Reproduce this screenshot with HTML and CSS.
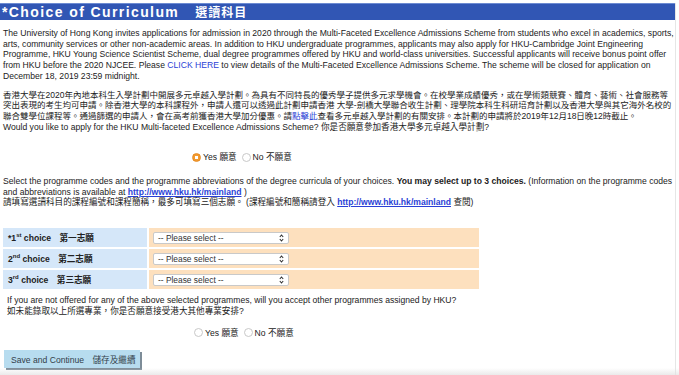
FILE: index.html
```html
<!DOCTYPE html>
<html lang="zh-Hant">
<head>
    <meta charset="UTF-8">
    <meta name="viewport" content="width=device-width, initial-scale=1.0">
    <title>Choice of Curriculum 選讀科目</title>
    <link rel="stylesheet" href="styles.css">
</head>
<body>
    <div class="pagina">
        <div class="titulo">*Choice of Curriculum<span class="titulo-cn">選讀科目</span></div>

        <p class="texto">The University of Hong Kong invites applications for admission in 2020 through the Multi-Faceted Excellence Admissions Scheme from students who excel in academics, sports, arts, community services or other non-academic areas. In addition to HKU undergraduate programmes, applicants may also apply for HKU-Cambridge Joint Engineering Programme, HKU Young Science Scientist Scheme, dual degree programmes offered by HKU and world-class universities. Successful applicants will receive bonus point offer from HKU before the 2020 NJCEE. Please <a href="#" class="enlace">CLICK HERE</a> to view details of the Multi-Faceted Excellence Admissions Scheme. The scheme will be closed for application on December 18, 2019 23:59 midnight.</p>

        <p class="texto">
            <span class="texto-cn">香港大學在2020年內地本科生入學計劃中開展多元卓越入學計劃。為具有不同特長的優秀學子提供多元求學機會。在校學業成績優秀，或在學術類競賽、體育、藝術、社會服務等<br>突出表現的考生均可申請。除香港大學的本科課程外，申請人還可以透過此計劃申請香港 大學-劍橋大學聯合收生計劃、理學院本科生科研培育計劃以及香港大學與其它海外名校的<br>聯合雙學位課程等。通過篩選的申請人，會在高考前獲香港大學加分優惠。請<a href="#" class="enlace">點擊此</a>查看多元卓越入學計劃的有關安排。本計劃的申請將於2019年12月18日晚12時截止。</span><br>
            Would you like to apply for the HKU Multi-faceted Excellence Admissions Scheme? 你是否願意參加香港大學多元卓越入學計劃?
        </p>

        <div class="opciones opciones-1">
            <label class="opcion"><span class="radio marcado"></span>Yes 願意</label>
            <label class="opcion"><span class="radio"></span>No 不願意</label>
        </div>

        <p class="texto seleccion">Select the programme codes and the programme abbreviations of the degree curricula of your choices. <b>You may select up to 3 choices.</b> (Information on the programme codes and abbreviations is available at <a href="#" class="enlace url">http://www.hku.hk/mainland</a> )<br>請填寫選讀科目的課程編號和課程簡稱，最多可填寫三個志願。 (課程編號和簡稱請登入 <a href="#" class="enlace url">http://www.hku.hk/mainland</a> 查閱)</p>

        <table class="tabla-elecciones">
            <tr>
                <td class="etiqueta">*1<sup>st</sup> choice <span class="cn">第一志願</span></td>
                <td class="campo">
                    <div class="selector">-- Please select --
                        <svg class="flechas" width="5" height="8" viewBox="0 0 5 8"><path d="M0.8 3 L2.5 1 L4.2 3 M0.8 5 L2.5 7 L4.2 5" fill="none" stroke="#333" stroke-width="1.1"/></svg>
                    </div>
                </td>
            </tr>
            <tr>
                <td class="etiqueta">2<sup>nd</sup> choice <span class="cn">第二志願</span></td>
                <td class="campo">
                    <div class="selector">-- Please select --
                        <svg class="flechas" width="5" height="8" viewBox="0 0 5 8"><path d="M0.8 3 L2.5 1 L4.2 3 M0.8 5 L2.5 7 L4.2 5" fill="none" stroke="#333" stroke-width="1.1"/></svg>
                    </div>
                </td>
            </tr>
            <tr>
                <td class="etiqueta">3<sup>rd</sup> choice <span class="cn">第三志願</span></td>
                <td class="campo">
                    <div class="selector">-- Please select --
                        <svg class="flechas" width="5" height="8" viewBox="0 0 5 8"><path d="M0.8 3 L2.5 1 L4.2 3 M0.8 5 L2.5 7 L4.2 5" fill="none" stroke="#333" stroke-width="1.1"/></svg>
                    </div>
                </td>
            </tr>
        </table>

        <p class="texto pregunta">If you are not offered for any of the above selected programmes, will you accept other programmes assigned by HKU?<br>如未能錄取以上所選專業，你是否願意接受港大其他專業安排?</p>

        <div class="opciones opciones-2">
            <label class="opcion"><span class="radio"></span>Yes 願意</label>
            <label class="opcion"><span class="radio"></span>No 不願意</label>
        </div>

        <button class="guardar-btn">Save and Continue <span class="cn">儲存及繼續</span></button>
    </div>
    <div class="sombra-inferior"></div>
</body>
</html>
```

FILE: styles.css
```css
body {
    font-family: "Liberation Sans", "Noto Sans CJK TC", sans-serif;
    margin: 0;
    padding: 3px 0 0 0;
    background-color: #ffffff;
    color: #222222;
    overflow: hidden;
}

.pagina {
    width: 672px;
    padding-left: 3px;
    border-right: 1px solid #e6e6e6;
    min-height: 372px;
}

.titulo {
    background-color: #3156b4;
    border-top: 1px solid #6d8bd2;
    color: white;
    font-weight: bold;
    font-size: 14px;
    letter-spacing: 1.4px;
    height: 16px;
    line-height: 16px;
    padding-left: 2px;
    margin-left: -3px;
}

.titulo-cn {
    margin-left: 16px;
    font-size: 12px;
    letter-spacing: 1px;
}

.texto {
    font-size: 8.6px;
    line-height: 10.7px;
    margin: 8px 0 8px 0;
}

.texto-cn {
    font-size: 8.5px;
}

.enlace {
    color: #2a3fd6;
    text-decoration: none;
}

.url {
    font-weight: bold;
    text-decoration: underline;
}

.opciones {
    font-size: 8.6px;
    display: flex;
    gap: 5px;
    height: 10px;
    line-height: 10px;
}

.opciones-1 {
    padding-left: 189px;
    margin: 20px 0 0 0;
}

.opciones-2 {
    padding-left: 191px;
    margin: 11px 0 11px 0;
}

.opcion {
    display: flex;
    align-items: center;
    gap: 2px;
}

.radio {
    width: 7px;
    height: 7px;
    border-radius: 50%;
    border: 1px solid #c8c8c8;
    background-color: white;
    display: inline-block;
}

.radio.marcado {
    border-color: #e68a20;
    background: radial-gradient(circle, white 0 1.5px, #f39a2e 2px);
}

.seleccion {
    margin-top: 14px;
    line-height: 10.3px;
}

.tabla-elecciones {
    border-spacing: 2px;
    margin: 19px 0 0 -2px;
    font-size: 8.6px;
}

.tabla-elecciones td {
    height: 19px;
    padding: 0;
    line-height: 10px;
}

.etiqueta {
    background-color: #d5e7f9;
    width: 139px;
    font-weight: bold;
    padding-left: 5px !important;
}

.etiqueta sup {
    font-size: 6px;
    line-height: 0;
}

.etiqueta .cn {
    margin-left: 6px;
}

.campo {
    background-color: #fde0be;
    width: 326px;
    padding-left: 4px !important;
}

.selector {
    width: 130px;
    height: 10px;
    line-height: 10px;
    background-color: white;
    border: 1px solid #c9c9c9;
    border-radius: 2px;
    padding-left: 4px;
    font-size: 8.4px;
    color: #333;
    position: relative;
}

.flechas {
    position: absolute;
    right: 4px;
    top: 1px;
}

.pregunta {
    margin: 4px 0 0 4px;
}

.guardar-btn {
    font-family: "Liberation Sans", "Noto Sans CJK TC", sans-serif;
    font-size: 8.6px;
    color: #33404a;
    background-color: #b7dcef;
    border: none;
    box-shadow: 2px 2px 0 #7d8c98;
    width: 136px;
    height: 18px;
    padding: 0 0 0 7px;
    text-align: left;
    cursor: pointer;
    margin-left: 1px;
}

.guardar-btn .cn {
    margin-left: 6px;
}

.sombra-inferior {
    position: absolute;
    left: 0;
    right: 0;
    top: 368px;
    height: 7px;
    background: linear-gradient(rgba(255, 255, 255, 0), rgba(225, 225, 225, 0.7));
}
```
